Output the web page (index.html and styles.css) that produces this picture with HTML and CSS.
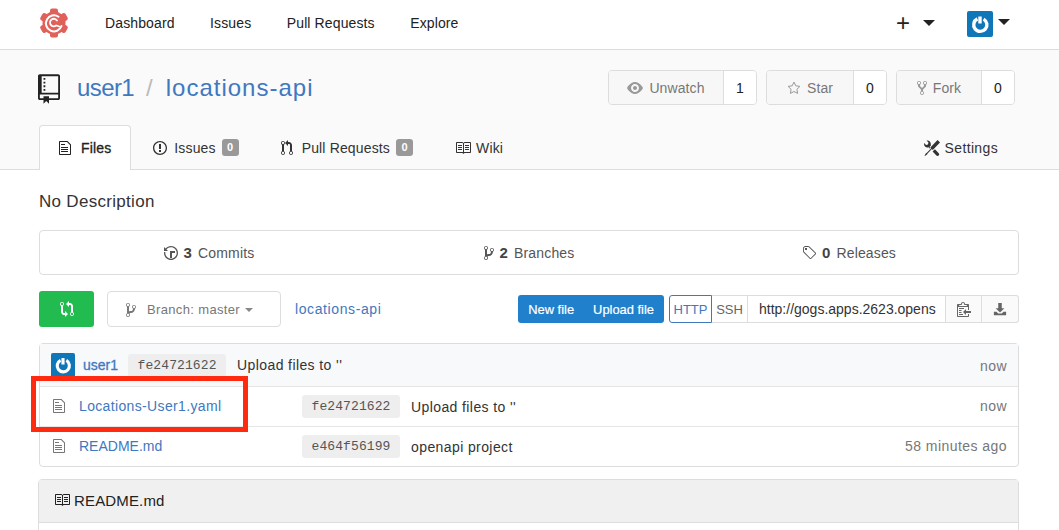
FILE: index.html
```html
<!DOCTYPE html>
<html lang="en">
<head>
<meta charset="utf-8">
<title>user1/locations-api</title>
<link rel="stylesheet" href="styles.css">
</head>
<body>
<svg class="defs" aria-hidden="true">
  <symbol id="i-repo" viewBox="0 0 12 16"><path d="M4 9H3V8h1v1zm0-3H3v1h1V6zm0-2H3v1h1V4zm0-2H3v1h1V2zm8-1v12c0 .55-.45 1-1 1H6v2l-1.500-1.500L3 16v-2H1c-.55 0-1-.45-1-1V1c0-.55.45-1 1-1h10c.55 0 1 .45 1 1zm-1 10H1v2h2v-1h3v1h5v-2zm0-10H2v9h9V1z"/></symbol>
  <symbol id="i-file" viewBox="0 0 12 16"><path d="M6 5H2V4h4v1zM2 8h7V7H2v1zm0 2h7V9H2v1zm0 2h7v-1H2v1zm10-7.500V14c0 .55-.45 1-1 1H1c-.55 0-1-.45-1-1V2c0-.55.45-1 1-1h7.500L12 4.500zM11 5L8 2H1v12h10V5z"/></symbol>
  <symbol id="i-issue" viewBox="0 0 14 16"><path d="M7 2.300c3.140 0 5.700 2.560 5.700 5.700s-2.560 5.700-5.700 5.700A5.710 5.710 0 0 1 1.300 8c0-3.140 2.560-5.700 5.700-5.700zM7 1C3.140 1 0 4.140 0 8s3.140 7 7 7 7-3.140 7-7-3.140-7-7-7zm1 3H6v5h2V4zm0 6H6v2h2v-2z"/></symbol>
  <symbol id="i-pr" viewBox="0 0 12 16"><path d="M11 11.280V5c-.03-.78-.34-1.470-.94-2.060C9.460 2.350 8.780 2.030 8 2H7V0L4 3l3 3V4h1c.27.02.48.11.69.31.21.2.3.42.31.69v6.280A1.993 1.993 0 0 0 10 15a1.993 1.993 0 0 0 1-3.720zm-1 2.920c-.66 0-1.200-.55-1.200-1.200 0-.65.55-1.200 1.200-1.200.65 0 1.200.55 1.200 1.200 0 .65-.55 1.200-1.200 1.200zM4 3c0-1.110-.89-2-2-2a1.993 1.993 0 0 0-1 3.720v6.560A1.993 1.993 0 0 0 2 15a1.993 1.993 0 0 0 1-3.720V4.720c.59-.34 1-.98 1-1.720zm-.8 10c0 .66-.55 1.200-1.200 1.200-.65 0-1.200-.55-1.200-1.200 0-.65.55-1.200 1.200-1.200.65 0 1.200.55 1.200 1.200zM2 4.200C1.340 4.200.8 3.650.8 3c0-.65.55-1.200 1.200-1.200.65 0 1.200.55 1.200 1.200 0 .65-.55 1.200-1.200 1.200z"/></symbol>
  <symbol id="i-book" viewBox="0 0 16 16"><path d="M3 5h4v1H3V5zm0 3h4V7H3v1zm0 2h4V9H3v1zm11-5h-4v1h4V5zm0 2h-4v1h4V7zm0 2h-4v1h4V9zm2-6v9c0 .55-.45 1-1 1H9.500l-1 1-1-1H2c-.55 0-1-.45-1-1V3c0-.55.45-1 1-1h5.500l1 1 1-1H15c.55 0 1 .45 1 1zm-8 .5L7.500 3H2v9h6V3.500zm7-.5H9.500l-.5.5V12h6V3z"/></symbol>
  <symbol id="i-tools" viewBox="0 0 16 16"><path d="M4.480 7.270c.26.26 1.280 1.330 1.280 1.330l.56-.58-.88-.91 1.690-1.800s-.76-.74-.43-.45c.32-1.190.03-2.510-.87-3.440C4.930.5 3.660.2 2.520.51l1.930 2-.51 1.960-1.890.52-1.930-2C-.19 4.170.1 5.480 1 6.400c.94.98 2.290 1.260 3.480.87zm6.440 1.940l-2.330 2.300 3.840 3.980c.31.33.73.49 1.140.49.41 0 .82-.16 1.140-.49.63-.65.63-1.700 0-2.350l-3.790-3.930zM16 2.530L13.550 0 6.330 7.460l.88.91-4.310 4.460-.99.53-1.390 2.270.35.37 2.200-1.440.51-1.020L7.900 9.080l.88.91L16 2.530z"/></symbol>
  <symbol id="i-eye" viewBox="0 0 16 16"><path d="M8.060 2C3 2 0 8 0 8s3 6 8.060 6C13 14 16 8 16 8s-3-6-7.940-6zM8 12c-2.200 0-4-1.780-4-4 0-2.200 1.800-4 4-4 2.220 0 4 1.800 4 4 0 2.220-1.780 4-4 4zm2-4c0 1.110-.89 2-2 2-1.110 0-2-.89-2-2 0-1.110.89-2 2-2 1.110 0 2 .89 2 2z"/></symbol>
  <symbol id="i-star" viewBox="0 0 14 16"><path fill="none" stroke="currentColor" stroke-width="1" d="M7 2.100l1.800 3.700 4.100.6-3 2.900.7 4.100L7 11.500l-3.600 1.900.7-4.100-3-2.900 4.100-.6z"/></symbol>
  <symbol id="i-fork" viewBox="0 0 10 16"><path d="M8 1a1.993 1.993 0 0 0-1 3.720V6L5 8 3 6V4.720A1.993 1.993 0 0 0 2 1a1.993 1.993 0 0 0-1 3.720V6.500l3 3v1.780A1.993 1.993 0 0 0 5 15a1.993 1.993 0 0 0 1-3.720V9.500l3-3V4.720A1.993 1.993 0 0 0 8 1zM2 4.200C1.340 4.200.8 3.650.8 3c0-.65.55-1.200 1.200-1.200.65 0 1.200.55 1.200 1.200 0 .65-.55 1.200-1.200 1.200zm3 10c-.66 0-1.200-.55-1.200-1.200 0-.65.55-1.200 1.200-1.200.65 0 1.200.55 1.200 1.200 0 .65-.55 1.200-1.200 1.200zm3-10c-.66 0-1.200-.55-1.200-1.200 0-.65.55-1.200 1.200-1.200.65 0 1.200.55 1.200 1.200 0 .65-.55 1.200-1.200 1.200z"/></symbol>
  <symbol id="i-branch" viewBox="0 0 10 16"><path d="M10 5c0-1.110-.89-2-2-2a1.993 1.993 0 0 0-1 3.720v.3c-.02.52-.23.98-.63 1.380-.4.4-.86.61-1.380.63-.83.02-1.480.16-2 .45V4.720a1.993 1.993 0 0 0-1-3.720C.88 1 0 1.890 0 3a2 2 0 0 0 1 1.720v6.560c-.59.35-1 .99-1 1.720 0 1.110.89 2 2 2 1.110 0 2-.89 2-2 0-.53-.2-1-.53-1.360.09-.06.48-.41.59-.47.25-.11.56-.17.94-.17 1.050-.05 1.950-.45 2.750-1.250S8.950 7.770 9 6.730h-.02C9.590 6.370 10 5.730 10 5zM2 1.800c.66 0 1.200.55 1.200 1.200 0 .65-.55 1.200-1.200 1.200C1.350 4.200.8 3.650.8 3c0-.65.55-1.200 1.200-1.200zm0 12.410c-.66 0-1.200-.55-1.200-1.200 0-.65.55-1.200 1.200-1.200.65 0 1.200.55 1.200 1.200 0 .65-.55 1.200-1.200 1.200zm6-8c-.66 0-1.200-.55-1.200-1.200 0-.65.55-1.200 1.200-1.200.65 0 1.200.55 1.200 1.200 0 .65-.55 1.200-1.200 1.200z"/></symbol>
  <symbol id="i-history" viewBox="0 0 14 16"><path d="M8 13H6V6h5v2H8v5zM7 1C4.810 1 2.870 2.020 1.590 3.590L0 2v4h4L2.500 4.500C3.550 3.170 5.170 2.300 7 2.300c3.140 0 5.700 2.560 5.700 5.700s-2.560 5.700-5.700 5.700A5.710 5.710 0 0 1 1.300 8c0-.34.03-.67.09-1H.08C.03 7.330 0 7.660 0 8c0 3.860 3.140 7 7 7s7-3.140 7-7-3.140-7-7-7z"/></symbol>
  <symbol id="i-tag" viewBox="0 0 14 16"><path d="M7.730 1.730C7.260 1.260 6.620 1 5.960 1H3.500C2.130 1 1 2.130 1 3.500v2.470c0 .66.27 1.300.73 1.770l6.060 6.060c.39.39 1.020.39 1.410 0l4.590-4.590a.996.996 0 0 0 0-1.410L7.730 1.730zM2.380 7.090c-.31-.3-.47-.7-.47-1.130V3.500c0-.88.72-1.590 1.590-1.590h2.470c.42 0 .83.16 1.130.47l6.140 6.130-4.730 4.730-6.130-6.150zM3.010 3h2v2H3V3h.01z"/></symbol>
  <symbol id="i-compare" viewBox="0 0 14 16"><path d="M5 12H4c-.27-.02-.48-.11-.69-.31-.21-.2-.3-.42-.31-.69V4.720A1.993 1.993 0 0 0 2 1a1.993 1.993 0 0 0-1 3.720V11c.03.78.34 1.470.94 2.060.6.59 1.280.91 2.060.94h1v2l3-3-3-3v2zM2 1.800c.66 0 1.200.55 1.200 1.200 0 .65-.55 1.200-1.200 1.200C1.350 4.200.8 3.650.8 3c0-.65.55-1.200 1.200-1.200zm11 9.480V5c-.03-.78-.34-1.470-.94-2.060-.6-.59-1.280-.91-2.060-.94H9V0L6 3l3 3V4h1c.27.02.48.11.69.31.21.2.3.42.31.69v6.280A1.993 1.993 0 0 0 12 15a1.993 1.993 0 0 0 1-3.720zm-1 2.920c-.66 0-1.200-.55-1.200-1.200 0-.65.55-1.200 1.200-1.200.65 0 1.200.55 1.200 1.200 0 .65-.55 1.200-1.200 1.200z"/></symbol>
  <symbol id="i-clippy" viewBox="0 0 14 16"><path d="M2 13h4v1H2v-1zm5-6H2v1h5V7zm2 3V8l-3 3 3 3v-2h5v-2H9zM4.500 9H2v1h2.500V9zM2 12h2.500v-1H2v1zm9 1h1v2c-.02.28-.11.52-.3.7-.19.18-.42.28-.7.3H1c-.55 0-1-.45-1-1V4c0-.55.45-1 1-1h3c0-1.110.89-2 2-2 1.110 0 2 .89 2 2h3c.55 0 1 .45 1 1v5h-1V6H1v9h10v-2zM2 5h8c0-.55-.45-1-1-1H8c-.55 0-1-.45-1-1s-.45-1-1-1-1 .45-1 1-.45 1-1 1H3c-.55 0-1 .45-1 1z"/></symbol>
  <symbol id="i-download" viewBox="0 0 16 16"><path d="M6 1h4v6h3l-5 5-5-5h3z"/><path d="M1 11h3l2 2h4l2-2h3v4H1z"/></symbol>
  <symbol id="i-avatar" viewBox="0 0 26 26"><rect width="26" height="26" rx="2" fill="#0f76b8"/><path fill="none" stroke="#fff" stroke-width="3.400" d="M10.400 7.900a6.600 6.600 0 1 0 6.200.2"/><path fill="none" stroke="#fff" stroke-width="3.400" d="M13 5.500v7"/></symbol>
</svg>

<nav class="topbar">
  <svg class="logo" viewBox="0 0 30 30" role="img" aria-label="Gogs">
    <g fill="#e0605a">
      <circle cx="15" cy="15" r="11.500"/>
      <rect x="11" y="0.500" width="8" height="29" rx="2"/>
      <rect x="11" y="0.500" width="8" height="29" rx="2" transform="rotate(60 15 15)"/>
      <rect x="11" y="0.500" width="8" height="29" rx="2" transform="rotate(120 15 15)"/>
    </g>
    <path fill="none" stroke="#fff" stroke-width="2" stroke-linecap="round" d="M19.500 8.800a8 8 0 1 0 3 9.200"/>
    <path fill="none" stroke="#fff" stroke-width="1.800" stroke-linecap="round" d="M18 12.500a3.800 3.800 0 1 0-.8 5l3.200 1"/>
  </svg>
  <div class="navlinks">
    <a href="#">Dashboard</a>
    <a href="#">Issues</a>
    <a href="#">Pull Requests</a>
    <a href="#">Explore</a>
  </div>
  <div class="navright">
    <span class="plus">+</span><i class="caret caret-new"></i>
    <svg class="nav-avatar"><use href="#i-avatar"/></svg><i class="caret caret-user"></i>
  </div>
</nav>

<header class="repohead">
  <div class="titlerow">
    <svg class="ico repoicon"><use href="#i-repo"/></svg>
    <h1 class="title"><a class="owner" href="#">user1</a><span class="slash">/</span><a class="reponame" href="#">locations-api</a></h1>
    <div class="actions">
      <div class="btngroup w-unwatch"><span class="btnlabel"><svg class="ico ic16"><use href="#i-eye"/></svg>Unwatch</span><span class="btncount">1</span></div>
      <div class="btngroup w-star"><span class="btnlabel"><svg class="ico ic14"><use href="#i-star"/></svg>Star</span><span class="btncount">0</span></div>
      <div class="btngroup w-fork"><span class="btnlabel"><svg class="ico ic10"><use href="#i-fork"/></svg>Fork</span><span class="btncount">0</span></div>
    </div>
  </div>
  <div class="tabs">
    <a class="tab active" href="#"><svg class="ico ic12"><use href="#i-file"/></svg>Files</a>
    <a class="tab" href="#"><svg class="ico ic14"><use href="#i-issue"/></svg>Issues<span class="badge">0</span></a>
    <a class="tab tab-pr" href="#"><svg class="ico ic12"><use href="#i-pr"/></svg>Pull Requests<span class="badge">0</span></a>
    <a class="tab tab-wiki" href="#"><svg class="ico ic16"><use href="#i-book"/></svg>Wiki</a>
    <a class="tab settings" href="#"><svg class="ico ic16"><use href="#i-tools"/></svg>Settings</a>
  </div>
</header>

<main class="content">
  <p class="desc">No Description</p>

  <div class="stats">
    <span class="stat"><svg class="ico ic14"><use href="#i-history"/></svg><b>3</b> Commits</span>
    <span class="stat"><svg class="ico ic10"><use href="#i-branch"/></svg><b>2</b> Branches</span>
    <span class="stat"><svg class="ico ic14"><use href="#i-tag"/></svg><b>0</b> Releases</span>
  </div>

  <div class="toolbar">
    <a class="compare" href="#"><svg class="ico ic14"><use href="#i-compare"/></svg></a>
    <a class="branch" href="#"><svg class="ico ic10"><use href="#i-branch"/></svg>Branch: master<i class="caret caret-small"></i></a>
    <a class="crumb" href="#">locations-api</a>
    <div class="filebtns"><a href="#">New file</a><a href="#">Upload file</a></div>
    <div class="clone">
      <span class="proto active">HTTP</span>
      <span class="proto">SSH</span>
      <span class="url">http://gogs.apps.2623.opens</span>
      <span class="cbtn"><svg class="ico ic14"><use href="#i-clippy"/></svg></span>
      <span class="cbtn"><svg class="ico ic14"><use href="#i-download"/></svg></span>
    </div>
  </div>

  <section class="files">
    <div class="row head">
      <svg class="row-avatar"><use href="#i-avatar"/></svg>
      <a class="author" href="#">user1</a>
      <span class="sha">fe24721622</span>
      <span class="msg">Upload files to ''</span>
      <span class="age">now</span>
    </div>
    <div class="row">
      <span class="name"><svg class="ico ic12"><use href="#i-file"/></svg><a class="long" href="#">Locations-User1.yaml</a></span>
      <span class="sha">fe24721622</span>
      <span class="msg">Upload files to ''</span>
      <span class="age">now</span>
    </div>
    <div class="row">
      <span class="name"><svg class="ico ic12"><use href="#i-file"/></svg><a href="#">README.md</a></span>
      <span class="sha">e464f56199</span>
      <span class="msg">openapi project</span>
      <span class="age">58 minutes ago</span>
    </div>
    <div class="highlight"></div>
  </section>

  <section class="readme">
    <div class="readme-head"><svg class="ico ic16"><use href="#i-book"/></svg>README.md</div>
    <div class="readme-body"></div>
  </section>
</main>
</body>
</html>
```

FILE: styles.css
```css
* { box-sizing: border-box; }
html, body { margin: 0; height: 530px; overflow: hidden; }
body { background: #fff; color: #333; font-family: "Liberation Sans", Arial, sans-serif; font-size: 14px; }
a { color: inherit; text-decoration: none; }
.defs { display: none; }
.ico { display: inline-block; height: 16px; fill: currentColor; flex: none; }
.ic10 { width: 10px; }
.ic12 { width: 12px; }
.ic14 { width: 14px; }
.ic16 { width: 16px; }

.caret { display: inline-block; width: 0; height: 0; border-style: solid; border-color: #222 transparent transparent; border-width: 6px 6px 0; }

.topbar { display: flex; align-items: center; height: 50px; padding: 0 40px 0 39px; background: #fff; border-bottom: 1px solid #ddd; }
.logo { width: 30px; height: 30px; flex: none; margin-top: -3px; }
.navlinks { display: flex; gap: 35.500px; margin-left: 36px; color: #222; margin-top: -3px; letter-spacing: .12px; }
.navright { display: flex; align-items: center; margin-left: auto; margin-top: -1px; }
.plus { font-size: 24px; line-height: 24px; color: #222; font-weight: 400; margin-top: -3px; margin-right: 1px; }
.caret-new { margin-left: 12px; margin-top: -3px; }
.nav-avatar { width: 26px; height: 26px; margin-left: 32px; }
.caret-user { margin-left: 5px; margin-right: 9px; margin-top: -5px; }

.repohead { height: 120px; padding: 20px 0 0 39px; background: #fafafa; border-bottom: 1px solid #ddd; }
.titlerow { display: flex; align-items: center; height: 35px; padding-right: 44px; }
.repoicon { width: 22px; height: 30px; color: #222; margin-top: 2px; margin-left: -1px; }
.title { margin: 0 0 0 17px; font-size: 24px; font-weight: 400; color: #4078c0; line-height: 35px; }
.owner { letter-spacing: -.6px; }
.slash { color: #bbb; margin: 0 13px 0 12px; }
.reponame { letter-spacing: 1px; }
.actions { display: flex; gap: 9px; margin-left: auto; }
.btngroup { display: flex; height: 35px; border: 1px solid #ddd; border-radius: 4px; overflow: hidden; }
.btnlabel { flex: 1; display: flex; align-items: center; justify-content: center; gap: 6px; color: #777; background: #f7f7f7; letter-spacing: .1px; }
.btnlabel .ico { color: #999; }
.btncount { display: flex; align-items: center; justify-content: center; width: 33px; color: #222; background: #fff; border-left: 1px solid #ddd; }
.w-unwatch { width: 149px; }
.w-star { width: 121px; }
.w-fork { width: 119px; }

.tabs { display: flex; align-items: stretch; height: 45px; margin-top: 20px; padding-right: 40px; color: #333; letter-spacing: .15px; }
.tab { display: flex; align-items: center; gap: 7px; padding: 0 20px 0 22px; }
.tab.active { color: #222; background: #fff; border: 1px solid #ddd; border-bottom: 0; border-radius: 4px 4px 0 0; gap: 10px; padding: 0 19px; -webkit-text-stroke: .3px #222; }
.tab-pr .ico { margin-right: 2px; }
.tab-wiki .ico { margin-right: -2px; }
.badge { margin-left: -1px; width: 17px; height: 17px; line-height: 17px; text-align: center; border-radius: 3px; background: #999; color: #fff; font-size: 11px; font-weight: 700; }
.settings { margin-left: auto; padding-right: 21px; letter-spacing: .35px; }
.settings .ico { margin-right: -2px; }

.content { position: relative; padding: 0 40px 0 39px; }
.desc { margin: 0; height: 60px; padding-top: 22px; font-size: 17px; letter-spacing: .3px; line-height: 20px; color: #333; }

.stats { display: grid; grid-template-columns: repeat(3, 1fr); align-items: center; height: 45px; padding: 0 9px; border: 1px solid #ddd; border-radius: 4px; color: #555; letter-spacing: .15px; }
.stat { display: flex; align-items: center; justify-content: center; gap: 6px; }
.stat b { color: #444; font-size: 15px; }

.toolbar { display: flex; align-items: center; height: 36px; margin-top: 16px; }
.compare { display: flex; align-items: center; justify-content: center; width: 55px; height: 36px; border-radius: 3px; background: #21bb4f; color: #fff; }
.branch { display: flex; align-items: center; gap: 11px; width: 174px; height: 36px; margin-left: 13px; padding: 1px 0 0 18px; border: 1px solid #ddd; border-radius: 4px; color: #777; font-size: 13px; letter-spacing: .35px; }
.caret-small { border-color: #888 transparent transparent; border-width: 4px 4px 0; margin-left: -6px; }
.crumb { margin-left: 14px; color: #4078c0; letter-spacing: .6px; }
.filebtns { display: flex; align-items: center; height: 28px; margin-left: auto; padding: 0 10px; gap: 19px; background: #2180cc; border-radius: 3px; color: #fff; font-size: 12.900px; -webkit-text-stroke: .2px #fff; }
.clone { display: flex; height: 28px; margin-left: 5px; font-size: 13px; }
.proto { display: flex; align-items: center; justify-content: center; width: 36px; border: 1px solid #ddd; border-left: 0; color: #666; }
.proto.active { width: 43px; border: 1px solid #4078c0; border-radius: 3px 0 0 3px; color: #4078c0; }
.url { display: flex; align-items: center; width: 198px; padding-left: 11px; border: 1px solid #ddd; border-left: 0; color: #333; font-size: 14px; white-space: nowrap; overflow: hidden; }
.cbtn { display: flex; align-items: center; justify-content: center; width: 36px; background: #fafafa; border: 1px solid #ddd; border-left: 0; color: #666; }
.cbtn:last-child { width: 37px; border-radius: 0 3px 3px 0; }

.files { position: relative; margin-top: 16px; border: 1px solid #ddd; border-radius: 4px; color: #333; }
.row { display: flex; align-items: center; height: 40px; padding: 0 11px 0 13px; border-top: 1px solid #e5e5e5; }
.row.head { height: 42px; padding-left: 11px; border-top: 0; background: #f8f9fb; }
.row-avatar { width: 24px; height: 24px; flex: none; }
.author { margin-left: 8px; color: #4078c0; -webkit-text-stroke: .3px #4078c0; }
.name { display: flex; align-items: center; gap: 14px; width: 249px; margin-top: -2px; color: #777; }
.name a { color: #4078c0; }
.name .long { letter-spacing: .35px; }
.sha { padding: 0 9.500px; height: 23px; line-height: 24px; border-radius: 3px; background: #eee; color: #555; font-family: "Liberation Mono", monospace; font-size: 13px; letter-spacing: .1px; }
.head .sha { margin-left: 10px; }
.msg { margin-left: 11px; letter-spacing: .4px; }
.age { margin-left: auto; margin-top: -2px; color: #777; letter-spacing: .45px; }
.head .age { margin-top: 1px; }
.highlight { position: absolute; left: -9px; top: 32px; width: 217px; height: 56px; border: 5px solid #ff2a10; }

.readme { margin: 12px 0 0 -1px; border: 1px solid #ddd; border-radius: 4px 4px 0 0; }
.readme-head { display: flex; align-items: center; gap: 4px; height: 43px; padding: 0 0 2px 15px; background: #f0f0f0; border-bottom: 1px solid #ddd; font-size: 15px; letter-spacing: .15px; color: #222; }
.readme-body { height: 20px; background: #fff; }
```
